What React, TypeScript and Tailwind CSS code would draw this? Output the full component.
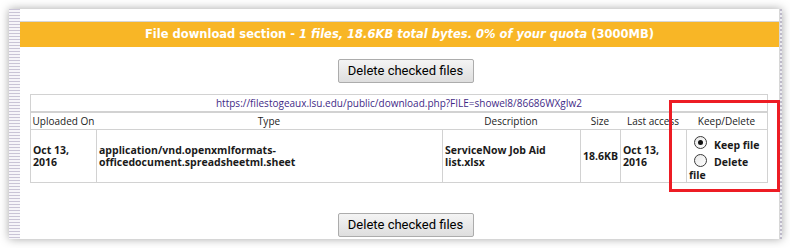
import React from "react";

const URL =
  "https://filestogeaux.lsu.edu/public/download.php?FILE=showel8/86686WXgIw2";

const Radio = ({ checked }: { checked?: boolean }) => (
  <span className="relative ml-[5px] mr-[7px] inline-flex h-[13px] w-[13px] shrink-0 items-center justify-center rounded-full border border-[#3a3a3a] bg-gradient-to-br from-[#e8e8e8] to-white">
    {checked && <span className="h-[5px] w-[5px] rounded-full bg-[#111]" />}
  </span>
);

const DeleteButton = () => (
  <button className="h-[24px] w-[136px] rounded-[2px] border border-[#acacac] bg-gradient-to-b from-[#f4f4f4] to-[#dedede] font-['Roboto',sans-serif] text-[13px] text-black">
    Delete checked files
  </button>
);

const cols = [
  { label: "Uploaded On", w: "w-[65px]" },
  { label: "Type", w: "w-[346px]" },
  { label: "Description", w: "w-[138px]" },
  { label: "Size", w: "w-[40px]" },
  { label: "Last access", w: "w-[66px]" },
  { label: "Keep/Delete", w: "w-[81px]" },
];

export default function App() {
  return (
    <div className="relative h-[248px] w-[790px] overflow-hidden bg-white pl-[9px] pt-[9px] font-['Open_Sans',sans-serif]">
      <div className="flex h-[230px] w-[773px] shadow-[0_0_9px_rgba(0,0,0,0.35)]">
        {/* left gutter stripes */}
        <div className="w-[11px] bg-[repeating-linear-gradient(to_bottom,#c9c4d6_0px,#c9c4d6_1px,#f6f5f9_1px,#f6f5f9_3px)]" />

        <div className="flex w-[759px] flex-col bg-white">
          <div className="h-[12px]" />
          <div className="flex h-[26px] items-center justify-center border-t border-[#d6d6d6] bg-[#f8b626] font-['DejaVu_Sans',sans-serif] text-[11.5px] font-bold text-white">
            <span>
              File download section -{" "}
              <i>1 files, 18.6KB total bytes. 0% of your quota</i> (3000MB)
            </span>
          </div>

          <div className="mt-[12px] flex justify-center pl-[12px]">
            <DeleteButton />
          </div>

          <div className="ml-[10px] mt-[11px] w-[738px] border border-[#d2d2d2]">
            <div className="flex h-[18px] items-center justify-center border-b-2 border-[#d2d2d2] text-[10px] text-[#3f2a86]">
              {URL}
            </div>
            <div className="flex h-[17px] border-b border-[#d2d2d2] text-[10px] text-[#222]">
              {cols.map((c) => (
                <div key={c.label} className={`${c.w} flex items-center justify-center whitespace-nowrap`}>
                  {c.label}
                </div>
              ))}
            </div>
            <div className="flex h-[52px] text-[10.5px] font-bold leading-[12px] text-[#1a1a1a]">
              <div className="flex w-[65px] items-center px-[2px]">Oct 13, 2016</div>
              <div className="flex w-[346px] items-center border-l border-[#d2d2d2] px-[2px]">
                application/vnd.openxmlformats-officedocument.spreadsheetml.sheet
              </div>
              <div className="flex w-[138px] items-center border-l border-[#d2d2d2] px-[2px]">
                ServiceNow Job Aid list.xlsx
              </div>
              <div className="flex w-[40px] items-center whitespace-nowrap border-l border-[#d2d2d2] px-[2px]">
                18.6KB
              </div>
              <div className="flex w-[66px] items-center border-l border-[#d2d2d2] px-[2px]">
                Oct 13, 2016
              </div>
              <div className="flex w-[81px] flex-col border-l border-[#d2d2d2] px-[2px] pt-[6px]">
                <div className="flex items-start">
                  <Radio checked />
                  <span className="leading-[18px]">Keep file</span>
                </div>
                <div className="flex items-start">
                  <Radio />
                  <span className="leading-[16px]">Delete</span>
                </div>
                <div className="leading-[10px]">file</div>
              </div>
            </div>
          </div>

          <div className="mt-[30px] flex justify-center pl-[12px]">
            <DeleteButton />
          </div>
        </div>

        {/* right gutter */}
        <div className="w-[3px] border-l border-[#d8d8d8] bg-[repeating-linear-gradient(to_bottom,#bdb9c9_0px,#bdb9c9_2px,#ececf1_2px,#ececf1_4px)]" />
      </div>

      {/* red annotation box */}
      <div className="pointer-events-none absolute left-[669px] top-[100px] h-[92px] w-[111px] border-[3px] border-[#ed1c24]" />
    </div>
  );
}
